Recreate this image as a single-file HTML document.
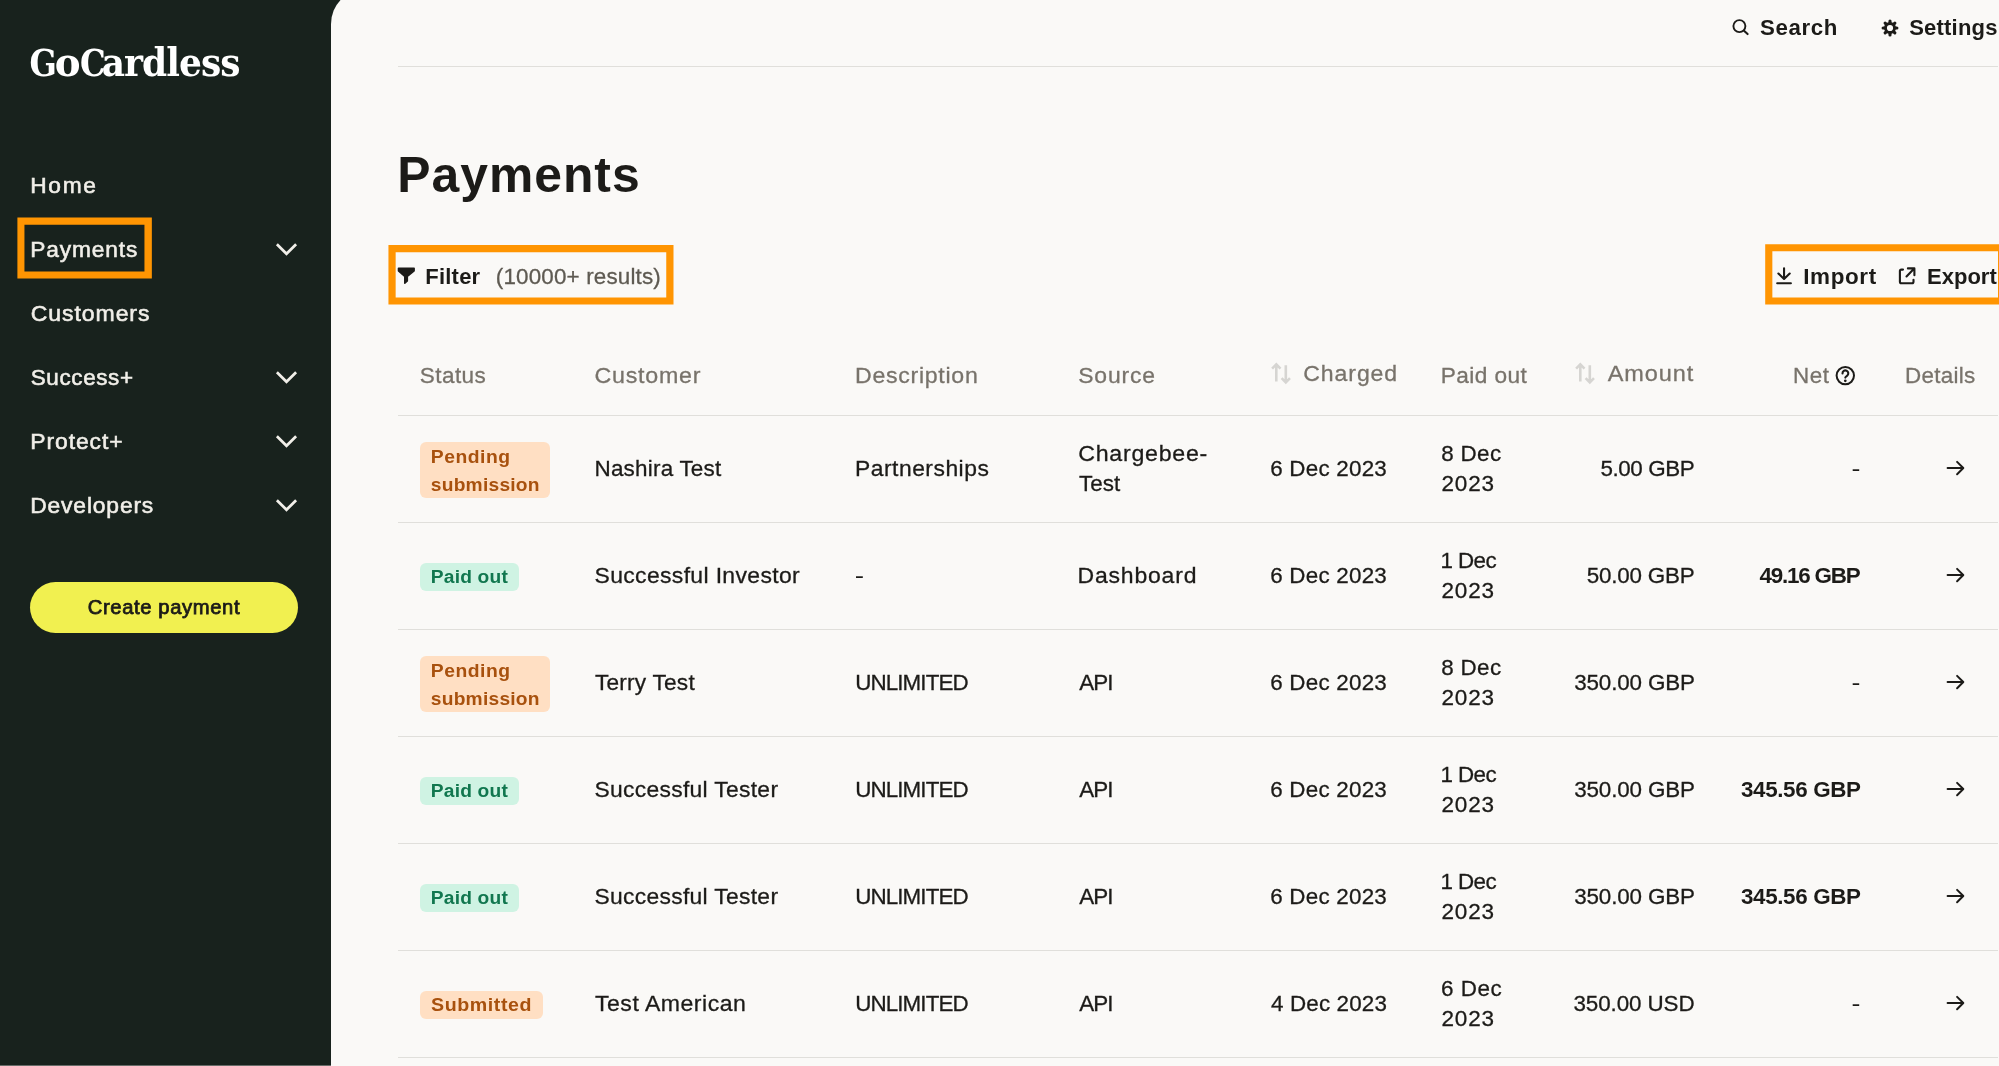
<!DOCTYPE html>
<html lang="en"><head><meta charset="utf-8"><title>Payments – GoCardless</title>
<style>
html,body{margin:0;padding:0;}
body{width:1999px;height:1066px;overflow:hidden;position:relative;background:#18221d;font-family:"Liberation Sans",sans-serif;}
#main{position:absolute;left:331px;top:-11px;width:1700px;height:1100px;background:#faf9f7;border-top-left-radius:35px;}
.t{position:absolute;white-space:pre;line-height:1;margin:0;padding:0;transform-origin:0 0;}
.b{position:absolute;display:block;}
.g{display:block;position:static;margin:0;padding:0;height:0;}
#fg{position:absolute;left:0;top:0;width:1999px;height:1066px;will-change:transform;}
</style></head><body>
<div id="main"></div>
<div style="position:absolute;left:0;top:1065px;width:331px;height:1px;background:#666c68"></div>
<div id="fg">
<nav class="g" id="sidebar" aria-label="Main navigation">
<a class="g" id="logo" aria-label="GoCardless"><span class="t " style="left:29px;top:45px;font-size:37px;letter-spacing:0.000px;color:#ffffff;transform:translateX(0.5px) scaleX(0.9633);font-weight:700;font-family:'DejaVu Serif Condensed','DejaVu Serif','Liberation Serif',serif;">G</span><span class="t " style="left:54px;top:42px;font-size:40px;letter-spacing:0.000px;color:#ffffff;transform:translateX(0.75px) scaleX(1.0754);font-weight:700;font-family:'DejaVu Serif Condensed','DejaVu Serif','Liberation Serif',serif;">o</span><span class="t " style="left:80px;top:45px;font-size:37px;letter-spacing:0.000px;color:#ffffff;transform:scaleX(0.9706);font-weight:700;font-family:'DejaVu Serif Condensed','DejaVu Serif','Liberation Serif',serif;">C</span><span class="t " style="left:101px;top:42px;font-size:40px;letter-spacing:-0.972px;color:#ffffff;transform:translateX(0.75px);font-weight:700;font-family:'DejaVu Serif Condensed','DejaVu Serif','Liberation Serif',serif;">ardless</span></a>
<span class="t " style="left:30px;top:175px;font-size:22px;letter-spacing:1.627px;color:#f1efe9;transform:translateX(0.25px) scaleX(1.0331);-webkit-text-stroke:0.55px #f1efe9;">Home</span>
<span class="t " style="left:30px;top:239px;font-size:22px;letter-spacing:0.853px;color:#f1efe9;transform:translateX(0.25px) scaleX(1.0324);-webkit-text-stroke:0.55px #f1efe9;">Payments</span>
<svg class="b" style="left:270px;top:237px" width="34" height="24" viewBox="0 0 34 24"><polyline points="6.9,7.2 16.5,16.8 26.1,7.2" fill="none" stroke="#f1efe9" stroke-width="2.7"/></svg>
<span class="t " style="left:30px;top:303px;font-size:22px;letter-spacing:0.879px;color:#f1efe9;transform:translateX(0.75px) scaleX(1.0471);-webkit-text-stroke:0.55px #f1efe9;">Customers</span>
<span class="t " style="left:30px;top:367px;font-size:22px;letter-spacing:0.607px;color:#f1efe9;transform:translateX(0.75px) scaleX(1.0209);-webkit-text-stroke:0.55px #f1efe9;">Success+</span>
<svg class="b" style="left:270px;top:365px" width="34" height="24" viewBox="0 0 34 24"><polyline points="6.9,7.2 16.5,16.8 26.1,7.2" fill="none" stroke="#f1efe9" stroke-width="2.7"/></svg>
<span class="t " style="left:30px;top:431px;font-size:22px;letter-spacing:0.887px;color:#f1efe9;transform:translateX(0.25px) scaleX(1.0401);-webkit-text-stroke:0.55px #f1efe9;">Protect+</span>
<svg class="b" style="left:270px;top:429px" width="34" height="24" viewBox="0 0 34 24"><polyline points="6.9,7.2 16.5,16.8 26.1,7.2" fill="none" stroke="#f1efe9" stroke-width="2.7"/></svg>
<span class="t " style="left:30px;top:495px;font-size:22px;letter-spacing:0.788px;color:#f1efe9;transform:translateX(0.25px) scaleX(1.0394);-webkit-text-stroke:0.55px #f1efe9;">Developers</span>
<svg class="b" style="left:270px;top:493px" width="34" height="24" viewBox="0 0 34 24"><polyline points="6.9,7.2 16.5,16.8 26.1,7.2" fill="none" stroke="#f1efe9" stroke-width="2.7"/></svg>
<svg class="b" style="left:16px;top:216px" width="137" height="64" viewBox="0 0 137 64"><path d="M1.40 1.50H135.85V62.50H1.40ZM8.45 8.80V55.40H128.45V8.80Z" fill="#ff9502" fill-rule="evenodd"/></svg>
<div class="b" style="left:30px;top:582px;width:268px;height:50.5px;background:#f1f050;border-radius:26px;"></div>
<span class="t " style="left:87px;top:598px;font-size:19.3px;letter-spacing:0.595px;color:#1c1b18;transform:translateX(0.75px) scaleX(1.0475);-webkit-text-stroke:0.75px #1c1b18;">Create payment</span>
</nav>
<header class="g" id="topbar">
<svg class="b" style="left:1725px;top:12px" width="32" height="32" viewBox="0 0 32 32"><circle cx="14.4" cy="14.1" r="6" fill="none" stroke="#1c1b18" stroke-width="1.9"/><line x1="19" y1="18.8" x2="22.6" y2="22.1" stroke="#1c1b18" stroke-width="2.1" stroke-linecap="round"/></svg>
<span class="t " style="left:1760px;top:17px;font-size:22px;letter-spacing:0.617px;color:#1c1b18;transform:scaleX(1.0115);font-weight:700;">Search</span>
<svg class="b" style="left:1873.7px;top:11.7px" width="32" height="32" viewBox="0 0 32 32"><g stroke="#1c1b18" stroke-width="3.1" stroke-linecap="round"><line x1="16.00" y1="21.40" x2="16.00" y2="22.90"/><line x1="12.18" y1="19.82" x2="11.12" y2="20.88"/><line x1="10.60" y1="16.00" x2="9.10" y2="16.00"/><line x1="12.18" y1="12.18" x2="11.12" y2="11.12"/><line x1="16.00" y1="10.60" x2="16.00" y2="9.10"/><line x1="19.82" y1="12.18" x2="20.88" y2="11.12"/><line x1="21.40" y1="16.00" x2="22.90" y2="16.00"/><line x1="19.82" y1="19.82" x2="20.88" y2="20.88"/></g><circle cx="16" cy="16" r="4.55" fill="none" stroke="#1c1b18" stroke-width="2.9"/></svg>
<span class="t " style="left:1909px;top:17px;font-size:22px;letter-spacing:0.194px;color:#1c1b18;transform:translateX(0.25px);font-weight:700;">Settings</span>
<div class="b" style="left:398px;top:65.6px;width:1599.5px;height:1.4px;background:#e0dfdb;"></div>
</header>
<section class="g" id="page-head">
<span class="t " style="left:397px;top:150px;font-size:49.5px;letter-spacing:0.996px;color:#1c1b18;transform:translateX(0.25px) scaleX(1.0064);font-weight:700;">Payments</span>
<svg class="b" style="left:387px;top:244px" width="288" height="62" viewBox="0 0 288 62"><path d="M1.45 1.00H286.50V60.50H1.45ZM8.65 8.20V53.50H279.25V8.20Z" fill="#ff9502" fill-rule="evenodd"/></svg>
<svg class="b" style="left:390px;top:260px" width="32" height="32" viewBox="0 0 32 32"><path d="M8.5 8.2H24.1V10.8L17.3 16.5V20.9L14.8 23.1V16.5L8.5 10.8Z" fill="#1c1b18" stroke="#1c1b18" stroke-width="1.6" stroke-linejoin="round"/></svg>
<span class="t " style="left:425px;top:266px;font-size:22px;letter-spacing:0.226px;color:#1c1b18;transform:translateX(0.25px);font-weight:700;">Filter</span>
<span class="t " style="left:495px;top:266px;font-size:22.4px;letter-spacing:0.174px;color:#5e5a52;transform:translateX(0.75px);-webkit-text-stroke:0.3px #5e5a52;">(10000+ results)</span>
<svg class="b" style="left:1764px;top:243px" width="244" height="63" viewBox="0 0 244 63"><path d="M1.20 1.20H242.00V61.50H1.20ZM8.35 8.30V54.50H234.00V8.30Z" fill="#ff9502" fill-rule="evenodd"/></svg>
<svg class="b" style="left:1768px;top:260px" width="32" height="32" viewBox="0 0 32 32"><g fill="none" stroke="#1c1b18" stroke-width="2.1" stroke-linecap="round" stroke-linejoin="round"><path d="M16.05 8.2V18.7M10.4 13.5L16.05 18.9L21.7 13.5M9.2 23.3H22.9"/></g></svg>
<span class="t " style="left:1803px;top:266px;font-size:22px;letter-spacing:0.597px;color:#1c1b18;transform:translateX(0.25px) scaleX(1.0203);font-weight:700;">Import</span>
<svg class="b" style="left:1891px;top:260px" width="32" height="32" viewBox="0 0 32 32"><g fill="none" stroke="#1c1b18" stroke-width="2.1" stroke-linecap="round" stroke-linejoin="round"><path d="M12 9.6H10.4Q8.9 9.6 8.9 11.1V21.8Q8.9 23.3 10.4 23.3H21Q22.5 23.3 22.5 21.8V19.7"/><path d="M15.5 16.5L23.2 8.6M16.9 8.4H23.4V15.3"/></g></svg>
<span class="t " style="left:1927px;top:266px;font-size:22px;letter-spacing:0.013px;color:#1c1b18;font-weight:700;">Export</span>
</section>
<section class="g" id="payments-table" role="table"><div class="g" role="row">
<span class="t " style="left:419px;top:365px;font-size:22.4px;letter-spacing:0.460px;color:#78736b;transform:translateX(0.75px) scaleX(1.0047);-webkit-text-stroke:0.3px #78736b;">Status</span>
<span class="t " style="left:594px;top:365px;font-size:22.4px;letter-spacing:0.726px;color:#78736b;transform:translateX(0.5px) scaleX(1.0372);-webkit-text-stroke:0.3px #78736b;">Customer</span>
<span class="t " style="left:855px;top:365px;font-size:22.4px;letter-spacing:0.686px;color:#78736b;transform:scaleX(1.0327);-webkit-text-stroke:0.3px #78736b;">Description</span>
<span class="t " style="left:1078px;top:365px;font-size:22.4px;letter-spacing:0.810px;color:#78736b;transform:translateX(0.25px) scaleX(1.0223);-webkit-text-stroke:0.3px #78736b;">Source</span>
<svg class="b" style="left:1262px;top:356px" width="40" height="40" viewBox="0 0 40 40"><g fill="none" stroke="#d6d5d2" stroke-width="2.6" stroke-linejoin="miter"><path d="M14.3 25.5V8.8M10.1 12.6L14.3 8.4L18.5 12.6"/><path d="M23.8 9.2V25.9M19.6 22.1L23.8 26.3L28 22.1"/></g></svg>
<span class="t " style="left:1303px;top:363px;font-size:22.4px;letter-spacing:0.879px;color:#78736b;transform:translateX(0.25px) scaleX(1.0304);-webkit-text-stroke:0.3px #78736b;">Charged</span>
<span class="t " style="left:1440px;top:365px;font-size:22.4px;letter-spacing:0.404px;color:#78736b;transform:translateX(0.75px) scaleX(1.0121);-webkit-text-stroke:0.3px #78736b;">Paid out</span>
<svg class="b" style="left:1566.2px;top:356px" width="40" height="40" viewBox="0 0 40 40"><g fill="none" stroke="#d6d5d2" stroke-width="2.6" stroke-linejoin="miter"><path d="M14.3 25.5V8.8M10.1 12.6L14.3 8.4L18.5 12.6"/><path d="M23.8 9.2V25.9M19.6 22.1L23.8 26.3L28 22.1"/></g></svg>
<span class="t " style="left:1607px;top:363px;font-size:22.4px;letter-spacing:0.855px;color:#78736b;transform:translateX(0.75px) scaleX(1.0490);-webkit-text-stroke:0.3px #78736b;">Amount</span>
<span class="t " style="left:1793px;top:365px;font-size:22.4px;letter-spacing:0.510px;color:#78736b;-webkit-text-stroke:0.3px #78736b;">Net</span>
<svg class="b" style="left:1830px;top:360px" width="32" height="32" viewBox="0 0 32 32"><g fill="none" stroke="#1c1b18" stroke-width="2" stroke-linecap="round"><circle cx="15.3" cy="15.6" r="8.7"/><path d="M12.5 13.5a2.9 2.9 0 1 1 4.7 2.1c-1.2 .8 -1.9 1.2 -1.9 2" stroke-width="2.1"/></g><circle cx="15.3" cy="20.8" r="1.35" fill="#1c1b18"/></svg>
<span class="t " style="left:1905px;top:365px;font-size:22.4px;letter-spacing:0.278px;color:#78736b;-webkit-text-stroke:0.3px #78736b;">Details</span>
</div>
<div class="b" style="left:398px;top:414.65px;width:1599.5px;height:1.4px;background:#e0dfdb;"></div>
<div class="b" style="left:398px;top:521.7px;width:1599.5px;height:1.4px;background:#e0dfdb;"></div>
<div class="b" style="left:398px;top:628.76px;width:1599.5px;height:1.4px;background:#e0dfdb;"></div>
<div class="b" style="left:398px;top:735.82px;width:1599.5px;height:1.4px;background:#e0dfdb;"></div>
<div class="b" style="left:398px;top:842.8800000000001px;width:1599.5px;height:1.4px;background:#e0dfdb;"></div>
<div class="b" style="left:398px;top:949.94px;width:1599.5px;height:1.4px;background:#e0dfdb;"></div>
<div class="b" style="left:398px;top:1057.0px;width:1599.5px;height:1.4px;background:#e0dfdb;"></div>
<div class="g" role="row">
<div class="b" style="left:420px;top:442px;width:130px;height:56px;background:#ffdfc3;border-radius:6px;"></div>
<span class="t " style="left:430px;top:447px;font-size:19.2px;letter-spacing:0.524px;color:#a8510e;transform:translateX(0.75px) scaleX(1.0072);font-weight:700;">Pending</span>
<span class="t " style="left:430px;top:475px;font-size:19.2px;letter-spacing:0.243px;color:#a8510e;transform:translateX(0.75px);font-weight:700;">submission</span>
<span class="t " style="left:594px;top:458px;font-size:22.4px;letter-spacing:0.213px;color:#1c1b18;transform:translateX(0.5px) scaleX(1.0026);-webkit-text-stroke:0.3px #1c1b18;">Nashira Test</span>
<span class="t " style="left:855px;top:458px;font-size:22.4px;letter-spacing:0.492px;color:#1c1b18;transform:scaleX(1.0207);-webkit-text-stroke:0.3px #1c1b18;">Partnerships</span>
<span class="t " style="left:1078px;top:443px;font-size:22.4px;letter-spacing:0.720px;color:#1c1b18;transform:translateX(0.25px) scaleX(1.0349);-webkit-text-stroke:0.3px #1c1b18;">Chargebee-</span>
<span class="t " style="left:1079px;top:473px;font-size:22.4px;letter-spacing:0.021px;color:#1c1b18;-webkit-text-stroke:0.3px #1c1b18;">Test</span>
<span class="t " style="left:1270px;top:458px;font-size:22.4px;letter-spacing:0.220px;color:#1c1b18;transform:translateX(0.25px);-webkit-text-stroke:0.3px #1c1b18;">6 Dec 2023</span>
<span class="t " style="left:1441px;top:443px;font-size:22.4px;letter-spacing:0.335px;color:#1c1b18;transform:translateX(0.25px);-webkit-text-stroke:0.3px #1c1b18;">8 Dec</span>
<span class="t " style="left:1441px;top:473px;font-size:22.4px;letter-spacing:0.822px;color:#1c1b18;transform:translateX(0.5px) scaleX(1.0050);-webkit-text-stroke:0.3px #1c1b18;">2023</span>
<span class="t " style="left:1600px;top:458px;font-size:22.4px;letter-spacing:-0.426px;color:#1c1b18;transform:translateX(0.5px);-webkit-text-stroke:0.3px #1c1b18;">5.00 GBP</span>
<span class="t " style="left:1851px;top:458px;font-size:22.4px;letter-spacing:0.000px;color:#1c1b18;transform:translateX(0.5px) scaleX(1.1901);">-</span>
<svg class="b" style="left:1940px;top:452px" width="32" height="32" viewBox="0 0 32 32"><path d="M7.6 16.05H22.6M17.1 9.9L23.3 16.05L17.1 22.2" fill="none" stroke="#1c1b18" stroke-width="2" stroke-linecap="round" stroke-linejoin="round"/></svg>
</div>
<div class="g" role="row">
<div class="b" style="left:420px;top:562.5px;width:98.75px;height:28px;background:#cff3e3;border-radius:6px;"></div>
<span class="t " style="left:430px;top:567px;font-size:19.2px;letter-spacing:0.204px;color:#11774f;transform:translateX(0.75px);font-weight:700;">Paid out</span>
<span class="t " style="left:594px;top:565px;font-size:22.4px;letter-spacing:0.345px;color:#1c1b18;transform:translateX(0.5px) scaleX(1.0242);-webkit-text-stroke:0.3px #1c1b18;">Successful Investor</span>
<span class="t " style="left:854px;top:565px;font-size:22.4px;letter-spacing:0.000px;color:#1c1b18;transform:translateX(0.75px) scaleX(1.2488);">-</span>
<span class="t " style="left:1077px;top:565px;font-size:22.4px;letter-spacing:0.794px;color:#1c1b18;transform:translateX(0.5px) scaleX(1.0263);-webkit-text-stroke:0.3px #1c1b18;">Dashboard</span>
<span class="t " style="left:1270px;top:565px;font-size:22.4px;letter-spacing:0.220px;color:#1c1b18;transform:translateX(0.25px);-webkit-text-stroke:0.3px #1c1b18;">6 Dec 2023</span>
<span class="t " style="left:1440px;top:550px;font-size:22.4px;letter-spacing:-0.583px;color:#1c1b18;transform:translateX(0.5px);-webkit-text-stroke:0.3px #1c1b18;">1 Dec</span>
<span class="t " style="left:1441px;top:580px;font-size:22.4px;letter-spacing:0.822px;color:#1c1b18;transform:translateX(0.5px) scaleX(1.0050);-webkit-text-stroke:0.3px #1c1b18;">2023</span>
<span class="t " style="left:1586px;top:565px;font-size:22.4px;letter-spacing:-0.206px;color:#1c1b18;transform:translateX(0.75px);-webkit-text-stroke:0.3px #1c1b18;">50.00 GBP</span>
<span class="t " style="left:1759px;top:565px;font-size:22.4px;letter-spacing:-1.192px;color:#1c1b18;transform:translateX(0.5px);font-weight:700;">49.16 GBP</span>
<svg class="b" style="left:1940px;top:559px" width="32" height="32" viewBox="0 0 32 32"><path d="M7.6 16.05H22.6M17.1 9.9L23.3 16.05L17.1 22.2" fill="none" stroke="#1c1b18" stroke-width="2" stroke-linecap="round" stroke-linejoin="round"/></svg>
</div>
<div class="g" role="row">
<div class="b" style="left:420px;top:656px;width:130px;height:56px;background:#ffdfc3;border-radius:6px;"></div>
<span class="t " style="left:430px;top:661px;font-size:19.2px;letter-spacing:0.524px;color:#a8510e;transform:translateX(0.75px) scaleX(1.0072);font-weight:700;">Pending</span>
<span class="t " style="left:430px;top:689px;font-size:19.2px;letter-spacing:0.243px;color:#a8510e;transform:translateX(0.75px);font-weight:700;">submission</span>
<span class="t " style="left:595px;top:672px;font-size:22.4px;letter-spacing:0.212px;color:#1c1b18;transform:scaleX(1.0118);-webkit-text-stroke:0.3px #1c1b18;">Terry Test</span>
<span class="t " style="left:855px;top:672px;font-size:22.4px;letter-spacing:-0.917px;color:#1c1b18;transform:translateX(0.25px);-webkit-text-stroke:0.3px #1c1b18;">UNLIMITED</span>
<span class="t " style="left:1079px;top:672px;font-size:22.4px;letter-spacing:-0.963px;color:#1c1b18;transform:translateX(0.25px);-webkit-text-stroke:0.3px #1c1b18;">API</span>
<span class="t " style="left:1270px;top:672px;font-size:22.4px;letter-spacing:0.220px;color:#1c1b18;transform:translateX(0.25px);-webkit-text-stroke:0.3px #1c1b18;">6 Dec 2023</span>
<span class="t " style="left:1441px;top:657px;font-size:22.4px;letter-spacing:0.335px;color:#1c1b18;transform:translateX(0.25px);-webkit-text-stroke:0.3px #1c1b18;">8 Dec</span>
<span class="t " style="left:1441px;top:687px;font-size:22.4px;letter-spacing:0.822px;color:#1c1b18;transform:translateX(0.5px) scaleX(1.0050);-webkit-text-stroke:0.3px #1c1b18;">2023</span>
<span class="t " style="left:1574px;top:672px;font-size:22.4px;letter-spacing:-0.154px;color:#1c1b18;transform:translateX(0.25px);-webkit-text-stroke:0.3px #1c1b18;">350.00 GBP</span>
<span class="t " style="left:1851px;top:672px;font-size:22.4px;letter-spacing:0.000px;color:#1c1b18;transform:translateX(0.5px) scaleX(1.1901);">-</span>
<svg class="b" style="left:1940px;top:666px" width="32" height="32" viewBox="0 0 32 32"><path d="M7.6 16.05H22.6M17.1 9.9L23.3 16.05L17.1 22.2" fill="none" stroke="#1c1b18" stroke-width="2" stroke-linecap="round" stroke-linejoin="round"/></svg>
</div>
<div class="g" role="row">
<div class="b" style="left:420px;top:776.5px;width:98.75px;height:28px;background:#cff3e3;border-radius:6px;"></div>
<span class="t " style="left:430px;top:781px;font-size:19.2px;letter-spacing:0.204px;color:#11774f;transform:translateX(0.75px);font-weight:700;">Paid out</span>
<span class="t " style="left:594px;top:779px;font-size:22.4px;letter-spacing:0.308px;color:#1c1b18;transform:translateX(0.5px) scaleX(1.0194);-webkit-text-stroke:0.3px #1c1b18;">Successful Tester</span>
<span class="t " style="left:855px;top:779px;font-size:22.4px;letter-spacing:-0.917px;color:#1c1b18;transform:translateX(0.25px);-webkit-text-stroke:0.3px #1c1b18;">UNLIMITED</span>
<span class="t " style="left:1079px;top:779px;font-size:22.4px;letter-spacing:-0.963px;color:#1c1b18;transform:translateX(0.25px);-webkit-text-stroke:0.3px #1c1b18;">API</span>
<span class="t " style="left:1270px;top:779px;font-size:22.4px;letter-spacing:0.220px;color:#1c1b18;transform:translateX(0.25px);-webkit-text-stroke:0.3px #1c1b18;">6 Dec 2023</span>
<span class="t " style="left:1440px;top:764px;font-size:22.4px;letter-spacing:-0.583px;color:#1c1b18;transform:translateX(0.5px);-webkit-text-stroke:0.3px #1c1b18;">1 Dec</span>
<span class="t " style="left:1441px;top:794px;font-size:22.4px;letter-spacing:0.822px;color:#1c1b18;transform:translateX(0.5px) scaleX(1.0050);-webkit-text-stroke:0.3px #1c1b18;">2023</span>
<span class="t " style="left:1574px;top:779px;font-size:22.4px;letter-spacing:-0.154px;color:#1c1b18;transform:translateX(0.25px);-webkit-text-stroke:0.3px #1c1b18;">350.00 GBP</span>
<span class="t " style="left:1741px;top:779px;font-size:22.4px;letter-spacing:-0.364px;color:#1c1b18;font-weight:700;">345.56 GBP</span>
<svg class="b" style="left:1940px;top:773px" width="32" height="32" viewBox="0 0 32 32"><path d="M7.6 16.05H22.6M17.1 9.9L23.3 16.05L17.1 22.2" fill="none" stroke="#1c1b18" stroke-width="2" stroke-linecap="round" stroke-linejoin="round"/></svg>
</div>
<div class="g" role="row">
<div class="b" style="left:420px;top:883.5px;width:98.75px;height:28px;background:#cff3e3;border-radius:6px;"></div>
<span class="t " style="left:430px;top:888px;font-size:19.2px;letter-spacing:0.204px;color:#11774f;transform:translateX(0.75px);font-weight:700;">Paid out</span>
<span class="t " style="left:594px;top:886px;font-size:22.4px;letter-spacing:0.308px;color:#1c1b18;transform:translateX(0.5px) scaleX(1.0194);-webkit-text-stroke:0.3px #1c1b18;">Successful Tester</span>
<span class="t " style="left:855px;top:886px;font-size:22.4px;letter-spacing:-0.917px;color:#1c1b18;transform:translateX(0.25px);-webkit-text-stroke:0.3px #1c1b18;">UNLIMITED</span>
<span class="t " style="left:1079px;top:886px;font-size:22.4px;letter-spacing:-0.963px;color:#1c1b18;transform:translateX(0.25px);-webkit-text-stroke:0.3px #1c1b18;">API</span>
<span class="t " style="left:1270px;top:886px;font-size:22.4px;letter-spacing:0.220px;color:#1c1b18;transform:translateX(0.25px);-webkit-text-stroke:0.3px #1c1b18;">6 Dec 2023</span>
<span class="t " style="left:1440px;top:871px;font-size:22.4px;letter-spacing:-0.583px;color:#1c1b18;transform:translateX(0.5px);-webkit-text-stroke:0.3px #1c1b18;">1 Dec</span>
<span class="t " style="left:1441px;top:901px;font-size:22.4px;letter-spacing:0.822px;color:#1c1b18;transform:translateX(0.5px) scaleX(1.0050);-webkit-text-stroke:0.3px #1c1b18;">2023</span>
<span class="t " style="left:1574px;top:886px;font-size:22.4px;letter-spacing:-0.154px;color:#1c1b18;transform:translateX(0.25px);-webkit-text-stroke:0.3px #1c1b18;">350.00 GBP</span>
<span class="t " style="left:1741px;top:886px;font-size:22.4px;letter-spacing:-0.364px;color:#1c1b18;font-weight:700;">345.56 GBP</span>
<svg class="b" style="left:1940px;top:880px" width="32" height="32" viewBox="0 0 32 32"><path d="M7.6 16.05H22.6M17.1 9.9L23.3 16.05L17.1 22.2" fill="none" stroke="#1c1b18" stroke-width="2" stroke-linecap="round" stroke-linejoin="round"/></svg>
</div>
<div class="g" role="row">
<div class="b" style="left:420px;top:991.25px;width:122.5px;height:27.5px;background:#ffdfc3;border-radius:6px;"></div>
<span class="t " style="left:431px;top:995px;font-size:19.2px;letter-spacing:0.567px;color:#a8510e;transform:scaleX(1.0226);font-weight:700;">Submitted</span>
<span class="t " style="left:595px;top:993px;font-size:22.4px;letter-spacing:0.496px;color:#1c1b18;transform:scaleX(1.0291);-webkit-text-stroke:0.3px #1c1b18;">Test American</span>
<span class="t " style="left:855px;top:993px;font-size:22.4px;letter-spacing:-0.917px;color:#1c1b18;transform:translateX(0.25px);-webkit-text-stroke:0.3px #1c1b18;">UNLIMITED</span>
<span class="t " style="left:1079px;top:993px;font-size:22.4px;letter-spacing:-0.963px;color:#1c1b18;transform:translateX(0.25px);-webkit-text-stroke:0.3px #1c1b18;">API</span>
<span class="t " style="left:1271px;top:993px;font-size:22.4px;letter-spacing:0.149px;color:#1c1b18;-webkit-text-stroke:0.3px #1c1b18;">4 Dec 2023</span>
<span class="t " style="left:1441px;top:978px;font-size:22.4px;letter-spacing:0.516px;color:#1c1b18;transform:scaleX(1.0030);-webkit-text-stroke:0.3px #1c1b18;">6 Dec</span>
<span class="t " style="left:1441px;top:1008px;font-size:22.4px;letter-spacing:0.822px;color:#1c1b18;transform:translateX(0.5px) scaleX(1.0050);-webkit-text-stroke:0.3px #1c1b18;">2023</span>
<span class="t " style="left:1573px;top:993px;font-size:22.4px;letter-spacing:-0.099px;color:#1c1b18;transform:translateX(0.5px);-webkit-text-stroke:0.3px #1c1b18;">350.00 USD</span>
<span class="t " style="left:1851px;top:993px;font-size:22.4px;letter-spacing:0.000px;color:#1c1b18;transform:translateX(0.5px) scaleX(1.1901);">-</span>
<svg class="b" style="left:1940px;top:987px" width="32" height="32" viewBox="0 0 32 32"><path d="M7.6 16.05H22.6M17.1 9.9L23.3 16.05L17.1 22.2" fill="none" stroke="#1c1b18" stroke-width="2" stroke-linecap="round" stroke-linejoin="round"/></svg>
</div>
</section>
</div>
</body></html>
